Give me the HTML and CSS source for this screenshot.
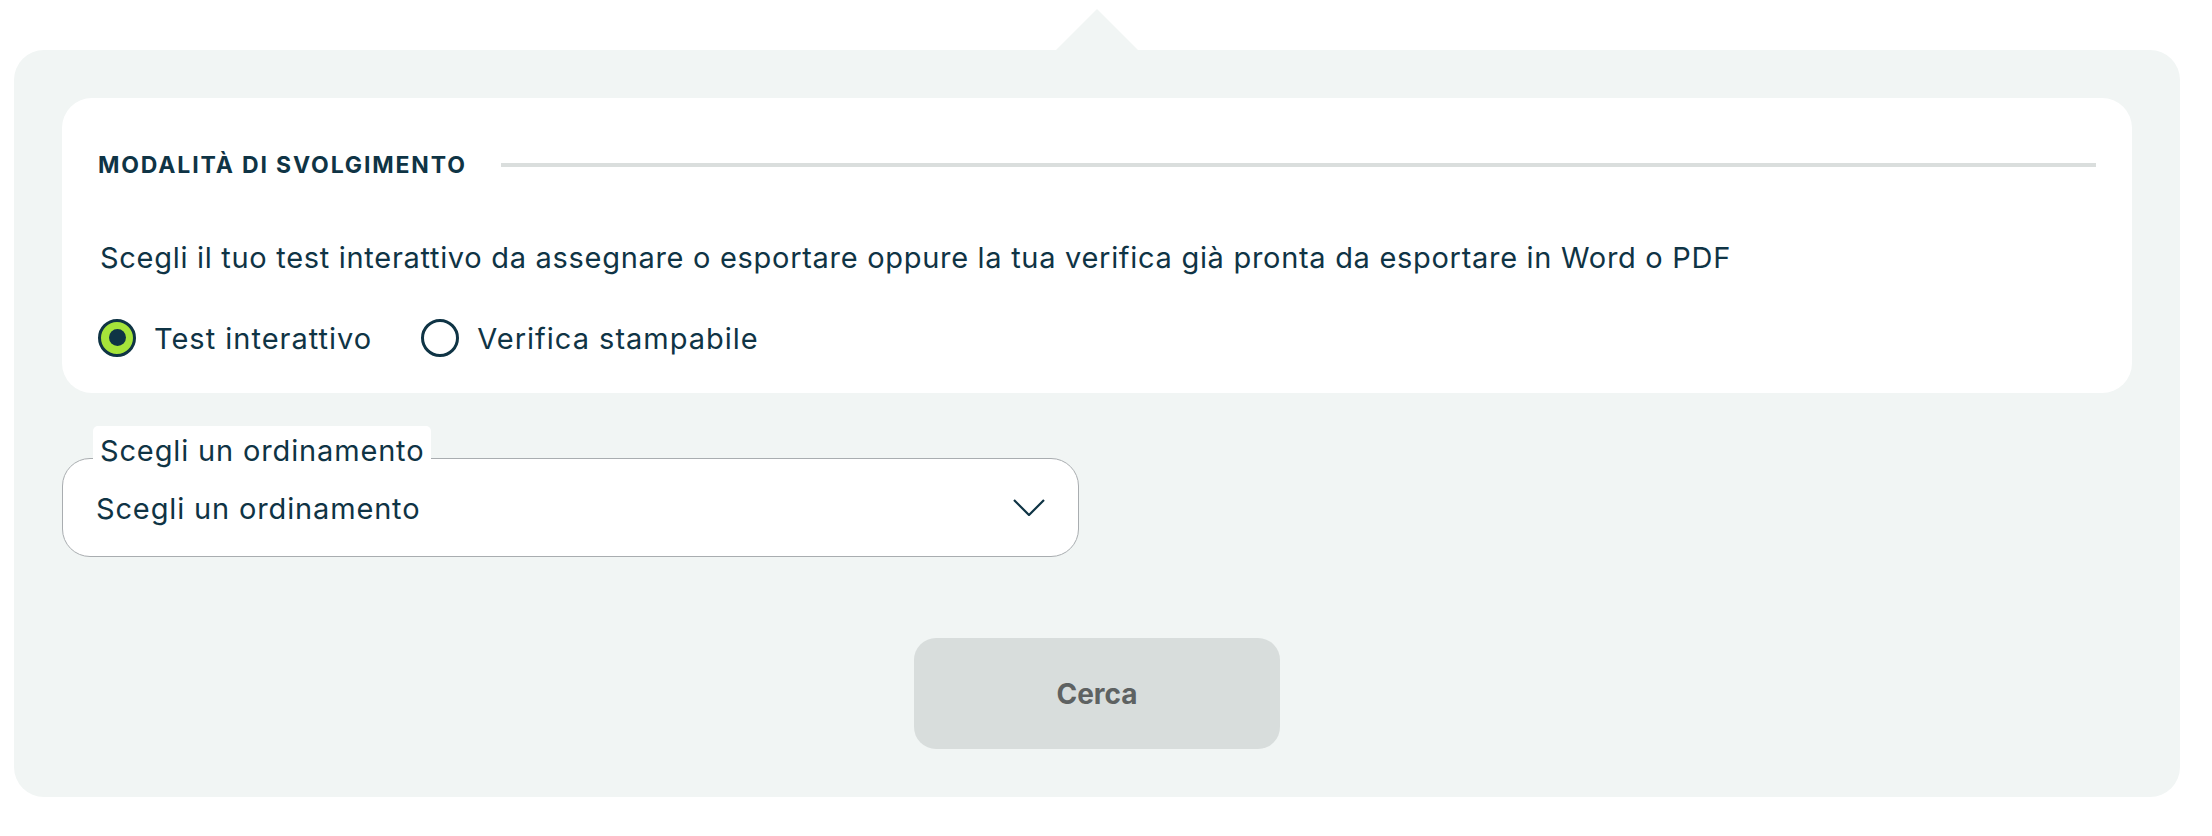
FILE: index.html
```html
<!DOCTYPE html>
<html lang="it">
<head>
<meta charset="utf-8">
<title>Modalità di svolgimento</title>
<link rel="stylesheet" href="styles.css">
</head>
<body>
<div class="page">
  <section class="panel">
    <div class="card">
      <div class="card-head">
        <h2 class="card-title">Modalità di svolgimento</h2>
        <span class="card-rule"></span>
      </div>
      <p class="card-desc">Scegli il tuo test interattivo da assegnare o esportare oppure la tua verifica già pronta da esportare in Word o PDF</p>
      <div class="radios">
        <label class="radio radio--checked"><span class="radio-dot"></span><span class="radio-text">Test interattivo</span></label>
        <label class="radio"><span class="radio-dot"></span><span class="radio-text">Verifica stampabile</span></label>
      </div>
    </div>
    <div class="field">
      <span class="field-label">Scegli un ordinamento</span>
      <div class="select">
        <span class="select-value">Scegli un ordinamento</span>
        <svg class="select-chevron" width="32" height="17" viewBox="0 0 32 17" aria-hidden="true"><path d="M1 1 L16 16 L31 1" fill="none" stroke="#0f3445" stroke-width="2.2"/></svg>
      </div>
    </div>
    <div class="actions">
      <button class="btn" type="button">Cerca</button>
    </div>
  </section>
</div>
</body>
</html>
```

FILE: styles.css
```css
* { box-sizing: border-box; }
body {
  margin: 0;
  background: #ffffff;
  font-family: "Inter", "Noto Sans", sans-serif;
  font-variant-ligatures: none;
  color: #0f3445;
}
.page {
  padding: 50px 32px 39px 14px;
}
.panel {
  position: relative;
  background: #f1f5f4;
  border-radius: 30px;
  padding: 48px;
}
.panel::before {
  content: "";
  position: absolute;
  left: 50%;
  top: 0;
  width: 58px;
  height: 58px;
  background: #f1f5f4;
  transform: translate(-50%, -50%) rotate(45deg);
}
.card {
  position: relative;
  background: #ffffff;
  border-radius: 30px;
  padding: 55px 36px 36px 36px;
}
.card-head {
  display: flex;
  align-items: center;
  gap: 34px;
  height: 24px;
}
.card-title {
  margin: 0;
  font-size: 23px;
  line-height: 24px;
  font-weight: 700;
  letter-spacing: 1.85px;
  text-transform: uppercase;
  white-space: nowrap;
}
.card-rule {
  flex: 1;
  height: 4px;
  background: #dadedd;
}
.card-desc {
  margin: 63px 0 0 2px;
  font-size: 29px;
  line-height: 36px;
  letter-spacing: 0.7px;
}
.radios {
  margin-top: 42px;
  display: flex;
  align-items: center;
  gap: 49px;
  height: 39px;
}
.radio {
  display: flex;
  align-items: center;
  gap: 18px;
}
.radio-dot {
  width: 38px;
  height: 38px;
  border-radius: 50%;
  border: 3.5px solid #0f3445;
  background: #ffffff;
  display: flex;
  align-items: center;
  justify-content: center;
}
.radio--checked .radio-dot {
  background: #a6e43a;
}
.radio--checked .radio-dot::after {
  content: "";
  width: 17px;
  height: 17px;
  border-radius: 50%;
  background: #0f3445;
}
.radio-text {
  font-size: 29px;
  line-height: 36px;
  letter-spacing: 1px;
  padding-top: 3px;
}
.field {
  position: relative;
  margin-top: 33px;
  padding-top: 32px;
}
.field-label {
  position: absolute;
  top: 0;
  left: 31px;
  background: #ffffff;
  border-radius: 5px;
  padding: 5px 7px 0 7px;
  height: 44px;
  font-size: 29px;
  line-height: 40px;
  letter-spacing: 0.85px;
  z-index: 1;
}
.select {
  width: 1017px;
  height: 99px;
  background: #ffffff;
  border: 1.5px solid #a9adb0;
  border-radius: 28px;
  display: flex;
  align-items: center;
  justify-content: space-between;
  padding: 0 33px 0 33px;
}
.select-value {
  font-size: 29px;
  line-height: 36px;
  letter-spacing: 0.85px;
  padding-top: 3px;
}
.select-chevron {
  display: block;
}
.actions {
  margin-top: 81px;
  display: flex;
  justify-content: center;
}
.btn {
  width: 366px;
  height: 111px;
  border: 0;
  border-radius: 22px;
  background: #d8dddc;
  color: #5e6262;
  font-family: "Inter", "Noto Sans", sans-serif;
  font-weight: 700;
  font-size: 28px;
}
```
